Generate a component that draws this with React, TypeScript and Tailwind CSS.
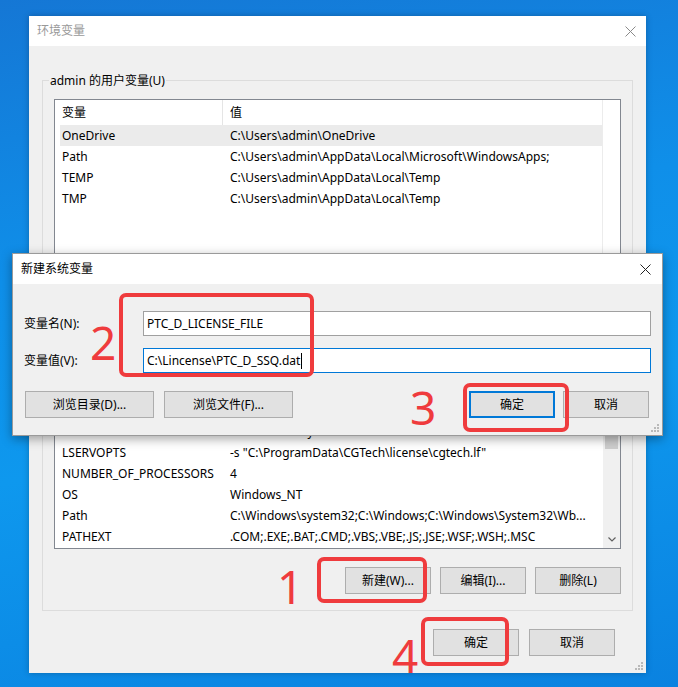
import React from "react";

const userVars: [string, string][] = [
  ["OneDrive", "C:\\Users\\admin\\OneDrive"],
  ["Path", "C:\\Users\\admin\\AppData\\Local\\Microsoft\\WindowsApps;"],
  ["TEMP", "C:\\Users\\admin\\AppData\\Local\\Temp"],
  ["TMP", "C:\\Users\\admin\\AppData\\Local\\Temp"],
];

const sysVars: [string, string][] = [
  ["ComSpec", "C:\\Windows\\system32\\cmd.exe"],
  ["CGTECH_PRODUCTS", "C:\\Program Files\\CGTech\\VERICUT 8.2\\windows64"],
  ["DriverData", "C:\\Windows\\System32\\Drivers\\DriverData"],
  ["LSERVOPTS", "-s \"C:\\ProgramData\\CGTech\\license\\cgtech.lf\""],
  ["NUMBER_OF_PROCESSORS", "4"],
  ["OS", "Windows_NT"],
  ["Path", "C:\\Windows\\system32;C:\\Windows;C:\\Windows\\System32\\Wb..."],
  ["PATHEXT", ".COM;.EXE;.BAT;.CMD;.VBS;.VBE;.JS;.JSE;.WSF;.WSH;.MSC"],
  ["PROCESSOR_ARCHITECTURE", "AMD64"],
];

const Btn: React.FC<{ label: string; wide?: boolean; focused?: boolean }> = ({ label, wide, focused }) => (
  <button
    className={
      (wide ? "w-[129px] " : "w-[86px] ") +
      (focused ? "border-2 border-[#0078d7] " : "border border-[#adadad] ") +
      "h-[27px] bg-[#e1e1e1] text-[12px] text-black leading-none"
    }
  >
    {label}
  </button>
);

const CloseX: React.FC<{ color: string }> = ({ color }) => (
  <svg width="11" height="11" viewBox="0 0 11 11">
    <path d="M0.5 0.5 L10.5 10.5 M10.5 0.5 L0.5 10.5" stroke={color} strokeWidth="1" />
  </svg>
);

const Grip = () => (
  <svg width="10" height="10" viewBox="0 0 10 10">
    <rect x="8" y="2" width="2" height="2" fill="#b9b9b9" />
    <rect x="5" y="5" width="2" height="2" fill="#b9b9b9" />
    <rect x="8" y="5" width="2" height="2" fill="#b9b9b9" />
    <rect x="2" y="8" width="2" height="2" fill="#b9b9b9" />
    <rect x="5" y="8" width="2" height="2" fill="#b9b9b9" />
    <rect x="8" y="8" width="2" height="2" fill="#b9b9b9" />
  </svg>
);

const Rows: React.FC<{ rows: [string, string][]; selected?: number }> = ({ rows, selected }) => (
  <div className="flex flex-col">
    {rows.map(([name, value], i) => (
      <div
        key={name + i}
        className={
          "ml-[5px] flex h-[21px] items-center whitespace-nowrap " + (i === selected ? "bg-[#ebebeb]" : "")
        }
      >
        <span className="w-[170px] pl-[2px]">{name}</span>
        <span>{value}</span>
      </div>
    ))}
  </div>
);

const ListHeader = () => (
  <div className="flex h-[25px] shrink-0 items-center">
    <div className="flex h-full w-[168px] items-center border-r border-[#e5e5e5] pl-[7px]">变量</div>
    <div className="pl-[7px]">值</div>
  </div>
);

const GroupBox: React.FC<{ title: string; children: React.ReactNode }> = ({ title, children }) => (
  <div className="relative mx-[13px] border border-[#dcdcdc] px-[11px] pt-[18px] pb-[16px]">
    <span className="absolute left-[6px] -top-[8px] bg-[#f0f0f0] px-[1px] leading-[16px]">{title}</span>
    {children}
  </div>
);

const GroupButtons = () => (
  <div className="mt-[18px] flex justify-end gap-[9px]">
    <Btn label="新建(W)..." />
    <Btn label="编辑(I)..." />
    <Btn label="删除(L)" />
  </div>
);

export default function App() {
  return (
    <div className="relative h-[687px] w-[678px] overflow-hidden bg-[linear-gradient(170deg,#1577d5_0%,#0f8fe9_35%,#0e98ee_60%,#0a82e0_100%)] pt-[16px] pl-[29px] font-['Noto_Sans','Noto_Sans_CJK_SC',sans-serif] text-[12px] text-black">
      {/* 环境变量 window */}
      <div className="flex h-[657px] w-[617px] flex-col bg-[#f0f0f0] shadow-[0_0_6px_rgba(0,0,0,0.25)]">
        <div className="flex h-[30px] shrink-0 items-center justify-between bg-white pl-[8px] pr-[10px]">
          <span className="text-[#999999]">环境变量</span>
          <CloseX color="#8a8a8a" />
        </div>

        <div className="relative flex flex-1 flex-col pt-[34px]">
          <GroupBox title="admin 的用户变量(U)">
            <div className="flex h-[156px] border border-[#828790] bg-white">
              <div className="flex w-[547px] flex-col">
                <ListHeader />
                <Rows rows={userVars} selected={0} />
              </div>
              <div className="flex-1 border-l border-[#ececec]" />
            </div>
            <GroupButtons />
          </GroupBox>

          <div className="mt-[17px]">
            <GroupBox title="系统变量(S)">
              <div className="flex h-[196px] overflow-hidden border border-[#828790] bg-white">
                <div className="flex w-[548px] flex-col overflow-hidden">
                  <ListHeader />
                  <Rows rows={sysVars} />
                </div>
                <div className="flex w-[17px] flex-col bg-[#f0f0f0]">
                  <div className="h-[17px]" />
                  <div className="mx-[2px] h-[78px] bg-[#cdcdcd]" />
                  <div className="flex-1" />
                  <div className="flex h-[17px] items-center justify-center">
                    <svg width="8" height="5" viewBox="0 0 8 5">
                      <path d="M0.5 0.5 L4 4 L7.5 0.5" stroke="#606060" strokeWidth="1.2" fill="none" />
                    </svg>
                  </div>
                </div>
              </div>
              <GroupButtons />
            </GroupBox>
          </div>

          <div className="mt-[18px] flex justify-end gap-[10px] pr-[31px]">
            <Btn label="确定" />
            <Btn label="取消" />
          </div>

          <div className="absolute right-[3px] bottom-[3px]">
            <Grip />
          </div>
        </div>
      </div>

      {/* 新建系统变量 dialog */}
      <div className="absolute left-[12px] top-[253px] flex h-[183px] w-[651px] flex-col border border-[#9a9a9a] bg-[#f0f0f0] shadow-[0_3px_10px_rgba(0,0,0,0.35)]">
        <div className="flex h-[30px] shrink-0 items-center justify-between bg-white pl-[8px] pr-[11px]">
          <span>新建系统变量</span>
          <CloseX color="#222222" />
        </div>
        <div className="relative flex flex-1 flex-col px-[11px] pt-[27px]">
          <div className="flex items-center">
            <span className="w-[119px]">变量名(N):</span>
            <div className="flex h-[25px] flex-1 items-center border border-[#a0a0a0] bg-white pl-[3px]">
              PTC_D_LICENSE_FILE
            </div>
          </div>
          <div className="mt-[12px] flex items-center">
            <span className="w-[119px]">变量值(V):</span>
            <div className="flex h-[25px] flex-1 items-center border border-[#0078d7] bg-white pl-[3px]">
              C:\Lincense\PTC_D_SSQ.dat
              <span className="ml-[1px] h-[16px] w-[1px] bg-black" />
            </div>
          </div>
          <div className="mt-[18px] flex items-center">
            <div className="ml-[1px] flex gap-[10px]">
              <Btn label="浏览目录(D)..." wide />
              <Btn label="浏览文件(F)..." wide />
            </div>
            <div className="ml-auto mr-[2px] flex gap-[8px]">
              <Btn label="确定" focused />
              <Btn label="取消" />
            </div>
          </div>
          <div className="absolute right-[3px] bottom-[3px]">
            <Grip />
          </div>
        </div>
      </div>

      {/* red annotations */}
      <div className="absolute left-[119px] top-[293px] h-[84px] w-[195px] rounded-[7px] border-[4px] border-[#ef3b3d]" />
      <div className="absolute left-[463px] top-[383px] h-[49px] w-[106px] rounded-[7px] border-[4px] border-[#ef3b3d]" />
      <div className="absolute left-[317px] top-[557px] h-[46px] w-[110px] rounded-[7px] border-[4px] border-[#ef3b3d]" />
      <div className="absolute left-[421px] top-[617px] h-[49px] w-[88px] rounded-[7px] border-[4px] border-[#ef3b3d]" />

      <span className="absolute left-[90px] top-[319px] font-['Noto_Sans',sans-serif] text-[46px] leading-none text-[#ef3b3d]">2</span>
      <span className="absolute left-[410px] top-[384px] font-['Noto_Sans',sans-serif] text-[46px] leading-none text-[#ef3b3d]">3</span>
      <span className="absolute left-[277px] top-[563px] font-['Noto_Sans',sans-serif] text-[46px] leading-none text-[#ef3b3d]">1</span>
      <span className="absolute left-[392px] top-[632px] font-['Noto_Sans',sans-serif] text-[46px] leading-none text-[#ef3b3d]">4</span>
    </div>
  );
}
